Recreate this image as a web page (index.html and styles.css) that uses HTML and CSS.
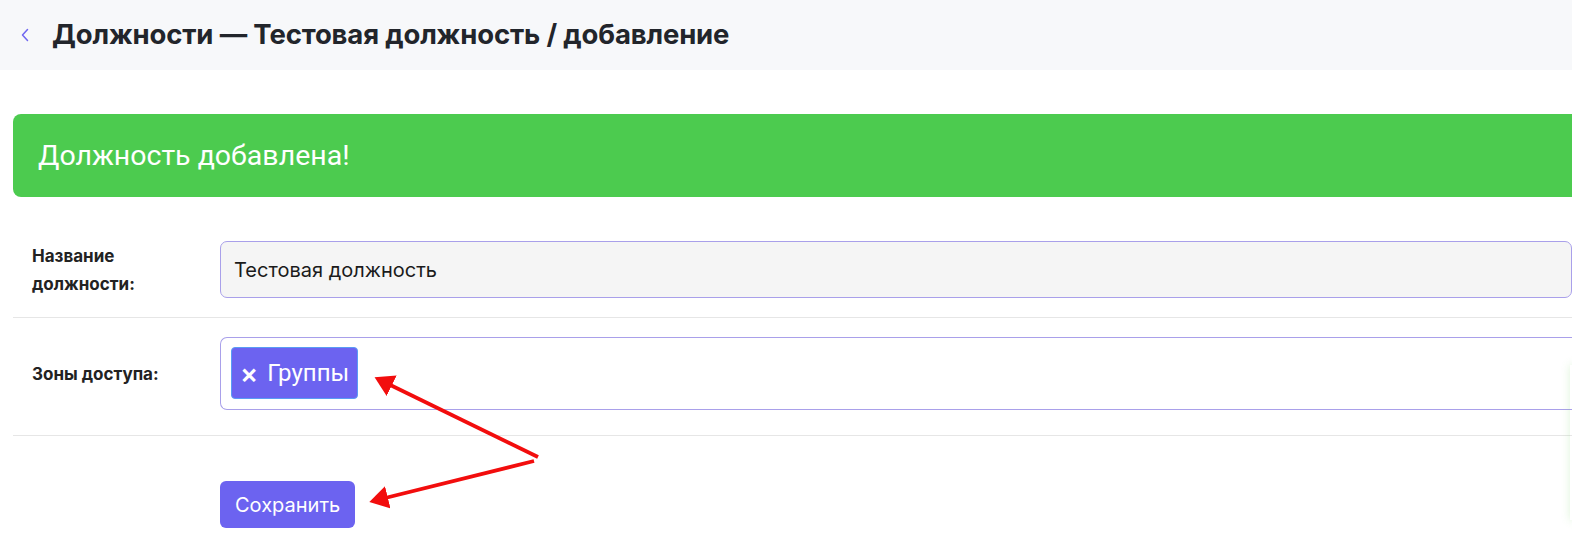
FILE: index.html
```html
<!DOCTYPE html>
<html lang="ru">
<head>
<meta charset="utf-8">
<link rel="stylesheet" href="styles.css">
</head>
<body>
<header class="topbar">
  <span class="back">
    <svg width="8" height="14" viewBox="0 0 8 14"><path d="M6.5 1.5 L1.5 7 L6.5 12.5" fill="none" stroke="#7067f0" stroke-width="1.5" stroke-linecap="round" stroke-linejoin="round"/></svg>
  </span>
  <h1 class="title">Должности — Тестовая должность / добавление</h1>
</header>
<main class="content">
  <div class="alert">Должность добавлена!</div>
  <form class="form">
    <div class="row">
      <label class="label">Название должности:</label>
      <div class="field input">Тестовая должность</div>
    </div>
    <div class="row row-tags">
      <label class="label">Зоны доступа:</label>
      <div class="field tags">
        <span class="tag"><span class="tag-x">×</span>Группы</span>
      </div>
    </div>
    <div class="actions">
      <button type="button" class="btn">Сохранить</button>
    </div>
  </form>
  <div class="toast-glow"></div>
</main>
<svg class="arrows" width="1572" height="556" viewBox="0 0 1572 556">
  <defs>
    <marker id="ah" markerWidth="6" markerHeight="6" refX="4" refY="3" orient="auto" markerUnits="strokeWidth">
      <path d="M0 0 L5 3 L0 6 Z" fill="#f20d0d"/>
    </marker>
  </defs>
  <line x1="538" y1="457" x2="378" y2="379" stroke="#f20d0d" stroke-width="3.8" marker-end="url(#ah)"/>
  <line x1="534" y1="461" x2="373" y2="501" stroke="#f20d0d" stroke-width="3.8" marker-end="url(#ah)"/>
</svg>
</body>
</html>
```

FILE: styles.css
```css
* { box-sizing: border-box; }
html, body { margin: 0; padding: 0; background: #fff; overflow: hidden; }
body { width: 1572px; height: 556px; font-family: Inter, "Noto Sans", sans-serif; color: #222; position: relative; }

.topbar {
  height: 70px;
  background: #f7f8fa;
  display: flex;
  align-items: center;
  padding-left: 21px;
  gap: 23px;
}
.back { display: flex; align-items: center; margin-top: -1px; }
.title {
  margin: 0;
  font-size: 27.5px;
  font-weight: 700;
  color: #22252b;
  letter-spacing: -0.15px;
  line-height: 1;
}

.content { padding: 44px 0 0 13px; }

.alert {
  background: #4ccb4f;
  color: #fff;
  height: 83px;
  border-radius: 8px 0 0 8px;
  display: flex;
  align-items: center;
  padding-left: 25px;
  font-family: Roboto, "Noto Sans", sans-serif;
  font-size: 28.5px;
  font-weight: 400;
}

.form { margin-top: 44px; }

.row {
  display: flex;
  align-items: center;
  border-bottom: 1px solid #e6e6e6;
  padding-bottom: 19px;
}
.row-tags { padding-top: 19px; padding-bottom: 25px; }

.label {
  width: 207px;
  padding-left: 19px;
  padding-right: 30px;
  font-size: 17px;
  font-weight: 700;
  line-height: 28px;
  color: #222;
}

.field {
  flex: 1;
  border: 1px solid #a9a0ea;
  border-radius: 7px 0 0 7px;
  border-right: none;
}
.input {
  height: 57px;
  background: #f5f5f5;
  display: flex;
  align-items: center;
  padding-left: 13px;
  font-size: 20px;
  color: #1b1b1b;
  border-right: 1px solid #a9a0ea;
  border-radius: 7px;
}
.tags {
  height: 73px;
  padding: 9px 10px;
  display: flex;
  align-items: flex-start;
}
.tag {
  display: inline-flex;
  align-items: center;
  height: 52px;
  padding: 0 8px 0 8px;
  background: #6c63f0;
  border: 1px solid #5a9cf5;
  border-radius: 4px;
  color: #fff;
  font-size: 24px;
  font-family: Roboto, Inter, sans-serif;
}
.tag-x { font-size: 27px; font-weight: 600; margin-right: 9px; font-family: Inter, sans-serif; line-height: 1; }

.actions { padding: 45px 0 0 207px; }
.btn {
  height: 47px;
  padding: 0 15px;
  background: #6c63f0;
  color: #fff;
  border: none;
  border-radius: 6px;
  font-family: Inter, sans-serif;
  font-size: 20px;
}

.toast-glow {
  position: absolute;
  right: -6px;
  top: 365px;
  width: 8px;
  height: 155px;
  box-shadow: 0 0 8px rgba(120, 210, 100, 0.25);
}

.arrows { position: absolute; left: 0; top: 0; pointer-events: none; }
```
